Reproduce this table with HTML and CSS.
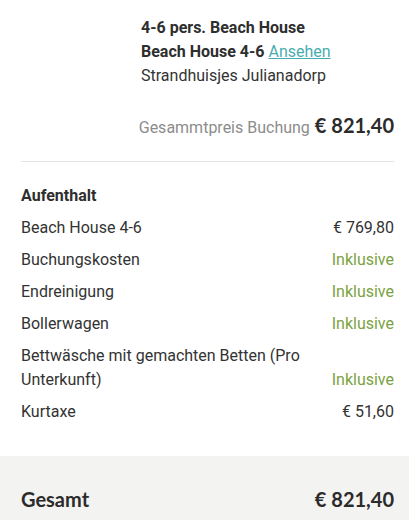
FILE: index.html
```html
<!DOCTYPE html>
<html>
<head>
<meta charset="utf-8">
<link rel="stylesheet" href="styles.css">
</head>
<body>
<div class="summary">
  <div class="head">
    <div class="thumb"></div>
    <div class="info">
      <div class="title">4-6 pers. Beach House</div>
      <div class="title">Beach House 4-6 <a class="link" href="#">Ansehen</a></div>
      <div class="park">Strandhuisjes Julianadorp</div>
    </div>
  </div>
  <div class="total-line">
    <span class="total-label">Gesammtpreis Buchung</span>
    <span class="total-price">€ 821,40</span>
  </div>
  <div class="divider"></div>
  <div class="section">
    <div class="section-title">Aufenthalt</div>
    <div class="row"><span class="name">Beach House 4-6</span><span class="price">€ 769,80</span></div>
    <div class="row"><span class="name">Buchungskosten</span><span class="incl">Inklusive</span></div>
    <div class="row"><span class="name">Endreinigung</span><span class="incl">Inklusive</span></div>
    <div class="row"><span class="name">Bollerwagen</span><span class="incl">Inklusive</span></div>
    <div class="row"><span class="name">Bettwäsche mit gemachten Betten (Pro Unterkunft)</span><span class="incl">Inklusive</span></div>
    <div class="row"><span class="name">Kurtaxe</span><span class="price">€ 51,60</span></div>
  </div>
  <div class="grand">
    <span class="grand-label">Gesamt</span>
    <span class="grand-price">€ 821,40</span>
  </div>
</div>
</body>
</html>
```
FILE: styles.css
```css
* { box-sizing: border-box; }
html, body { margin: 0; padding: 0; background: #fff; }
body {
  font-family: Roboto, "Liberation Sans", sans-serif;
  font-size: 16px;
  line-height: 24px;
  color: #333;
}
.summary { width: 409px; }
.head {
  display: flex;
  padding: 16px 15px 0 21px;
}
.thumb { width: 120px; flex: none; }
.title { font-weight: 700; color: #2e2e2e; }
.link { color: #4aacb0; font-weight: 400; text-decoration: underline; }
.park { color: #333; }
.total-line {
  display: flex;
  justify-content: flex-end;
  align-items: baseline;
  gap: 5px;
  padding: 25px 15px 0 21px;
  height: 73px;
}
.total-label { color: #8c8c8c; }
.total-price {
  font-family: Lato, "Open Sans", sans-serif;
  font-weight: 700;
  font-size: 20px;
  color: #2b2b2b;
}
.divider {
  margin: 0 15px 0 21px;
  height: 1px;
  background: #e4e4e4;
}
.section {
  padding: 22px 15px 32px 21px;
  display: flex;
  flex-direction: column;
  gap: 8px;
}
.section-title { font-weight: 700; color: #2e2e2e; }
.row {
  display: flex;
  justify-content: space-between;
  align-items: flex-end;
  gap: 16px;
}
.name { color: #333; max-width: 290px; }
.price { color: #333; white-space: nowrap; }
.incl { color: #7ba23f; white-space: nowrap; }
.grand {
  background: #f3f3f2;
  height: 64px;
  padding: 31px 15px 0 21px;
  display: flex;
  justify-content: space-between;
  align-items: baseline;
  font-family: Lato, "Open Sans", sans-serif;
  font-weight: 700;
  font-size: 20px;
  color: #2b2b2b;
}
```
